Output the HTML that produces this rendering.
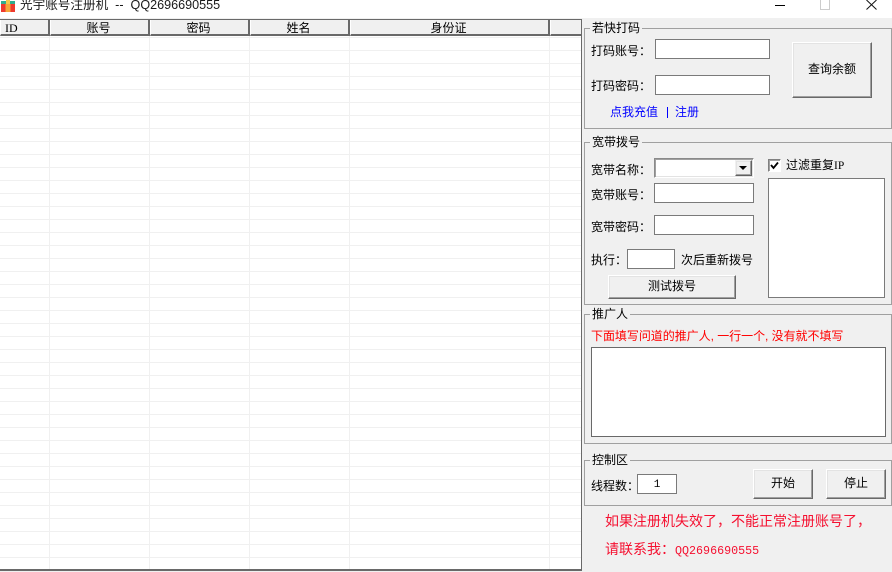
<!DOCTYPE html>
<html><head><meta charset="utf-8">
<style>
html,body{margin:0;padding:0}
body{width:892px;height:572px;overflow:hidden;position:relative;background:#f0f0f0;font:12px "Liberation Sans","WenQuanYi Zen Hei","Noto Sans CJK SC",sans-serif;color:#000}
div{position:absolute;box-sizing:border-box}
.t{white-space:nowrap;line-height:16px;height:16px}
.g{border:1px solid #a0a0a0}
.lg{background:#f0f0f0;padding:0 2px;white-space:nowrap;line-height:16px;height:16px;left:590px}
.i{background:#fff;border:1px solid #7a7a7a}
.b{background:#f0f0f0;border:1px solid;border-color:#fff #696969 #696969 #fff;box-shadow:inset -1px -1px 0 #a0a0a0,inset 1px 1px 0 #e3e3e3;text-align:center;white-space:nowrap}
.h{top:20px;height:16px;background:#f0f0f0;border-right:2px solid #696969;border-bottom:2px solid #696969;border-left:1px solid #fff;text-align:center;line-height:17px;font-size:12px;white-space:nowrap;padding-right:2px}
.v{top:36px;height:533px;width:1px;background:#f0f0f0}
</style></head><body>
<div style="left:0;top:0;width:892px;height:18px;background:#fff"></div>
<svg style="position:absolute;left:0;top:0" width="16" height="12" viewBox="0 0 16 12"><rect x="1" y="2" width="14" height="10" fill="#ee3a2e"/><rect x="5.500" y="2" width="5" height="10" fill="#f7a63a"/><rect x="1" y="1" width="14" height="3" fill="#2fae8e"/><rect x="6" y="0" width="4" height="4" fill="#f2c94c"/></svg>
<div class="t" style="left:20px;top:-3px;font-size:12.600px;color:#1a1a1a">光宇账号注册机&nbsp; --&nbsp; QQ2696690555</div>
<svg style="position:absolute;left:770px;top:0" width="115" height="14" viewBox="0 0 115 14"><path d="M5 5.500H15" stroke="#000" fill="none"/><path d="M50.500 0V9.500H59.500V0" stroke="#ccc" fill="none"/><path d="M96.500 0L106.500 9.500M106.500 0L96.500 9.500" stroke="#111" fill="none"/></svg>

<!-- list -->
<div style="left:0;top:19px;width:582px;height:552px;background:#fff;border-top:1px solid #696969;border-right:1px solid #696969;border-bottom:2px solid #696969"></div>
<div style="left:0;top:37px;width:581px;height:532px;background:repeating-linear-gradient(to bottom,#f0f0f0 0,#f0f0f0 1px,transparent 1px,transparent 13px)"></div>
<div class="v" style="left:49px"></div><div class="v" style="left:149px"></div><div class="v" style="left:249px"></div><div class="v" style="left:349px"></div><div class="v" style="left:549px"></div>
<div class="h" style="left:0;width:50px;text-align:left;padding-left:4px;font-family:'Liberation Serif',serif;font-size:12px">ID</div>
<div class="h" style="left:50px;width:100px">账号</div>
<div class="h" style="left:150px;width:100px">密码</div>
<div class="h" style="left:250px;width:100px">姓名</div>
<div class="h" style="left:350px;width:200px">身份证</div>
<div class="h" style="left:550px;width:31px;border-right:0"></div>

<!-- group 1 -->
<div class="g" style="left:584px;top:28px;width:308px;height:101px"></div>
<div class="lg" style="top:20px">若快打码</div>
<div class="t" style="left:591px;top:43px">打码账号：</div>
<div class="t" style="left:591px;top:78px">打码密码：</div>
<div class="i" style="left:655px;top:39px;width:115px;height:20px"></div>
<div class="i" style="left:655px;top:75px;width:115px;height:20px"></div>
<div class="b" style="left:792px;top:42px;width:80px;height:56px;line-height:53px">查询余额</div>
<div class="t" style="left:610px;top:104px;color:#00f">点我充值</div>
<div style="left:667px;top:107px;width:1px;height:11px;background:#00f"></div>
<div class="t" style="left:675px;top:104px;color:#00f">注册</div>

<!-- group 2 -->
<div class="g" style="left:584px;top:142px;width:308px;height:163px"></div>
<div class="lg" style="top:134px">宽带拨号</div>
<div class="t" style="left:591px;top:162px">宽带名称：</div>
<div class="t" style="left:591px;top:187px">宽带账号：</div>
<div class="t" style="left:591px;top:219px">宽带密码：</div>
<div class="t" style="left:591px;top:252px">执行：</div>
<div class="t" style="left:681px;top:252px">次后重新拨号</div>
<div style="left:654px;top:158px;width:100px;height:20px;background:#fff;border:1px solid;border-color:#8a8a8a #fff #fff #8a8a8a;box-shadow:inset 1px 1px 0 #a0a0a0,inset -1px -1px 0 #e3e3e3"></div>
<div class="b" style="left:735px;top:160px;width:17px;height:16px;border-color:#f0f0f0 #606060 #606060 #f0f0f0"></div>
<svg style="position:absolute;left:739px;top:166px" width="9" height="5"><path d="M0 0H8L4 4Z" fill="#000"/></svg>
<div style="left:768px;top:159px;width:13px;height:13px;background:#fff;border:1px solid;border-color:#808080 #fff #fff #808080;box-shadow:inset 1px 1px 0 #a0a0a0"></div>
<svg style="position:absolute;left:768px;top:159px" width="13" height="13"><path d="M3 6L5.500 9L10 3.500" stroke="#000" stroke-width="1.800" fill="none"/></svg>
<div class="i" style="left:654px;top:183px;width:100px;height:20px"></div>
<div class="i" style="left:654px;top:215px;width:100px;height:20px"></div>
<div class="i" style="left:627px;top:249px;width:48px;height:20px"></div>
<div class="b" style="left:608px;top:275px;width:128px;height:24px;line-height:21px">测试拨号</div>
<div class="t" style="left:786px;top:157px">过滤重复<span style="font-family:'Liberation Serif',serif;font-size:11.500px">IP</span></div>
<div class="i" style="left:768px;top:178px;width:117px;height:120px"></div>

<!-- group 3 -->
<div class="g" style="left:584px;top:314px;width:308px;height:130px"></div>
<div class="lg" style="top:306px">推广人</div>
<div class="t" style="left:591px;top:328px;color:#f00;letter-spacing:-.04px">下面填写问道的推广人, 一行一个, 没有就不填写</div>
<div class="i" style="left:591px;top:347px;width:295px;height:90px;border-color:#696969"></div>

<!-- group 4 -->
<div class="g" style="left:584px;top:460px;width:308px;height:46px"></div>
<div class="lg" style="top:452px">控制区</div>
<div class="t" style="left:591px;top:478px">线程数：</div>
<div class="i" style="left:637px;top:474px;width:40px;height:20px;text-align:center;line-height:20px;font-family:'Liberation Mono',monospace;font-size:11px">1</div>
<div class="b" style="left:753px;top:469px;width:60px;height:30px;line-height:27px">开始</div>
<div class="b" style="left:826px;top:469px;width:60px;height:30px;line-height:27px">停止</div>
<div class="t" style="left:605px;top:513px;color:#f51030;font-size:14px">如果注册机失效了，不能正常注册账号了，</div>
<div class="t" style="left:605px;top:541px;color:#f51030;font-size:14px">请联系我：<span style="font-family:'Liberation Mono',monospace;font-size:11.700px">QQ2696690555</span></div>
</body></html>
